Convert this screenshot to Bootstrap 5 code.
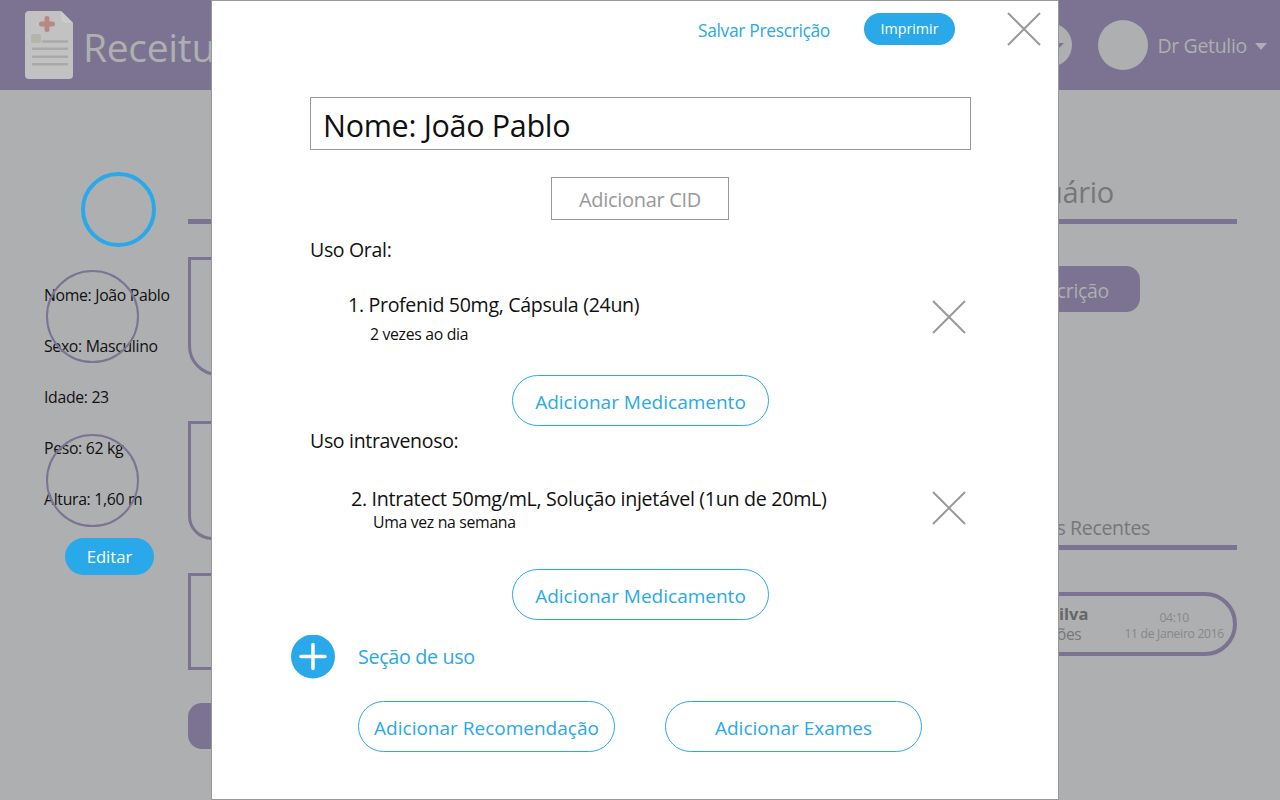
<!DOCTYPE html>
<html lang="pt-BR"><head><meta charset="utf-8"><title>Receituário</title>
<link href="https://cdn.jsdelivr.net/npm/bootstrap@5.3.0/dist/css/bootstrap.min.css" rel="stylesheet">
<style>
:root{--pur:#7b7391;--bg:#aeafb1;--blu:#29a8ea;--gry:#999}
html,body{height:100%;overflow:hidden}
body{background:var(--bg);font-family:"Open Sans","Noto Sans",sans-serif;color:#111;position:relative;letter-spacing:-.02em}
.topbar{height:90px;background:var(--pur);color:var(--bg);padding:11px 13px 11px 25px}
.brand-name{font-size:39px;margin-left:10px;line-height:1;margin-top:2px}
.bell{width:44px;height:44px;border-radius:50%;background:var(--bg);margin-right:26px;padding-right:8px}
.bell-caret{width:0;height:0;border:5px solid transparent;border-top:5px solid var(--pur);border-bottom:0}
.avatar{width:50px;height:50px;border-radius:50%;background:var(--bg);margin-right:9px}
.doc-name{font-size:19.5px;padding-top:2px}
.caret-down{width:0;height:0;border:6.5px solid transparent;border-top:7px solid var(--bg);border-bottom:0;margin-left:8px;margin-top:3px}
.body-area{height:710px}
.side{width:188px;padding:82px 0 0 44px;font-size:15.8px;position:relative}
.side-avatar{width:75px;height:75px;border-radius:50%;border:4px solid var(--blu);margin-left:37px;margin-bottom:38px}
.side p{margin:0;height:51px;line-height:20px}
.ring{position:absolute;left:46px;width:93px;height:93px;border:2px solid var(--pur);border-radius:50%}
.ring-a{top:180px}.ring-b{top:344px}
.edit-btn{width:89px;height:37px;background:var(--blu);color:#fff;border:0;border-radius:19px;font-size:16.7px;padding:0;margin-left:21px;margin-top:-2px}
.main-col{flex:0 0 460px;padding-top:129px}
.right-col{flex:1;padding:84px 43px 0 60px;color:#777}
.rule{height:5px;background:var(--pur)}
.box{border:3px solid var(--pur)}
.box-a{height:119px;margin-top:33px;border-radius:0 0 0 30px}
.box-b{height:119px;margin-top:45px;border-radius:0 0 0 24px}
.box-c{height:97px;margin-top:33px}
.purple-btn{height:46px;background:var(--pur);color:var(--bg);border-radius:14px;display:flex;align-items:center;font-size:19.5px}
.purple-a{margin-top:33px;width:260px;justify-content:center}
.purple-b{margin-top:42px;width:432px;justify-content:flex-end;padding:3px 31px 0 0}
.title-r{font-size:29px;line-height:36px;margin-bottom:9px;text-align:right;padding-right:123px}
.recent-t{font-size:19.5px;line-height:24px;margin-top:204px;margin-bottom:5px;text-align:right;padding-right:87px}
.recent-card{height:64px;border:4px solid var(--pur);border-radius:32px;margin-top:42px;padding:0 9px 0 20px}
.recent-who{margin-right:36px;text-align:right;padding-top:1px}
.recent-name{font-size:16.5px;font-weight:700;line-height:20px;color:#666;letter-spacing:0}
.recent-sub{font-size:15.5px;line-height:21px;margin-right:7px}
.recent-time{font-size:12.2px;line-height:16px;text-align:center;padding-top:3px;color:#888}
.sheet{position:fixed;left:211px;top:0;width:848px;height:800px;background:#fff;border:1px solid var(--gry);padding:0 87px 0 98px;z-index:5;color:#111}
.sheet-top{height:96px;margin-right:-70px;padding-top:11px}
.save-link{color:var(--blu);font-size:17.4px;text-decoration:none;margin-right:34px;margin-top:5px}
.print-btn{width:91px;height:32px;background:var(--blu);color:#fff;border:0;border-radius:16px;font-size:14.3px;padding:0;margin-top:1px;margin-right:52px}
.x-top{width:34px;height:34px;display:block}
.name-box{height:53px;border:1px solid var(--gry);font-size:30.5px;padding-left:12px;line-height:54px}
.cid-box{width:178px;height:43px;border:1px solid var(--gry);color:#999;font-size:20px;margin:27px 0 17px 241px;padding-top:2px;display:flex;align-items:center;justify-content:center}
.sec-label{font-size:19.5px;line-height:26px}
.sec-gap{margin-top:2px}
.med{position:relative;font-size:19.7px}
.med-a{height:112px;padding:29px 0 0 38px;font-size:19.6px}
.med-b{height:115px;padding:32px 0 0 41px}
.med .sub{display:block;font-size:15.8px;padding-left:22px;line-height:20px}
.med-a .sub{margin-top:6px}
.med-b .sub{margin-top:0}
.med-line{line-height:26px}
.x-med{position:absolute;right:5px;top:37px;width:34px;height:34px}
.pill{width:257px;height:51px;background:#fff;border:1px solid var(--blu);border-radius:26px;color:var(--blu);font-size:19px;padding:4px 0 0;display:block}
.add-sec{margin:15px 0 23px -19px;height:43px}
.plus{width:44px;height:44px;flex:none;margin-right:23px}
.add-sec span{color:var(--blu);font-size:19.7px}
.pill-row{margin-left:48px;gap:50px}
</style></head><body>
<header class="topbar d-flex align-items-center">
<svg width="48" height="68" viewBox="0 0 48 68"><path d="M4 0H36L48 12V64a4 4 0 0 1-4 4H4a4 4 0 0 1-4-4V4a4 4 0 0 1 4-4Z" fill="#c2c2c2"/><path d="M36 0L48 12H41a5 5 0 0 1-5-5Z" fill="#cbcbc9"/><path d="M22 7.500V18.500M16.500 13H27.500" stroke="#b88882" stroke-width="5" stroke-linecap="round"/><rect x="6" y="23" width="10" height="9" rx="2" fill="#b5b5a6"/><path d="M18 30.500H42M8 37.800H42M8 45.700H42M8 53.300H42" stroke="#a9a9a7" stroke-width="2.500" stroke-linecap="round"/></svg>
<div class="brand-name">Receituário</div>
<div class="ms-auto d-flex align-items-center">
<div class="bell d-flex align-items-center justify-content-end"><span class="bell-caret"></span></div><div class="avatar"></div><div class="doc-name">Dr Getulio</div><div class="caret-down"></div>
</div></header>
<div class="body-area d-flex">
<aside class="side">
<div class="side-avatar"></div>
<p>Nome: João Pablo</p><p>Sexo: Masculino</p><p>Idade: 23</p><p>Peso: 62 kg</p><p>Altura: 1,60 m</p>
<button class="edit-btn">Editar</button>
<span class="ring ring-a"></span><span class="ring ring-b"></span>
</aside>
<section class="main-col">
<div class="rule"></div>
<div class="box box-a"></div><div class="box box-b"></div><div class="box box-c"></div>
<div class="purple-btn purple-a">Adicionar</div>
</section>
<section class="right-col">
<div class="title-r">Dados do Usuário</div><div class="rule"></div>
<div class="purple-btn purple-b">Nova Prescrição</div>
<div class="recent-t">Prescrições Recentes</div><div class="rule"></div>
<div class="recent-card d-flex align-items-center justify-content-end">
<div class="recent-who"><div class="recent-name">João da Silva</div><div class="recent-sub">Prescrições</div></div>
<div class="recent-time">04:10<br>11 de Janeiro 2016</div>
</div>
</section>
</div>
<div class="sheet">
<div class="sheet-top d-flex justify-content-end align-items-start">
<a class="save-link" href="#">Salvar Prescrição</a>
<button class="print-btn">Imprimir</button>
<svg class="x-top" viewBox="0 0 34 34"><path d="M1 1L33 33M33 1L1 33" stroke="#999" stroke-width="2"/></svg>
</div>
<div class="name-box">Nome: João Pablo</div>
<div class="cid-box">Adicionar CID</div>
<div class="sec-label">Uso Oral:</div>
<div class="med med-a"><div class="med-line">1. Profenid 50mg, Cápsula (24un)</div><div class="sub">2 vezes ao dia</div>
<svg class="x-med" viewBox="0 0 34 34"><path d="M1 1L33 33M33 1L1 33" stroke="#999" stroke-width="2"/></svg></div>
<button class="pill mx-auto">Adicionar Medicamento</button>
<div class="sec-label sec-gap">Uso intravenoso:</div>
<div class="med med-b"><div class="med-line">2. Intratect 50mg/mL, Solução injetável (1un de 20mL)</div><div class="sub">Uma vez na semana</div>
<svg class="x-med" viewBox="0 0 34 34"><path d="M1 1L33 33M33 1L1 33" stroke="#999" stroke-width="2"/></svg></div>
<button class="pill mx-auto">Adicionar Medicamento</button>
<div class="add-sec d-flex align-items-center">
<svg class="plus" viewBox="0 0 44 44"><circle cx="22" cy="21.500" r="22" fill="#29a8ea"/><path d="M10 21.500H34M22 9.500V33.500" stroke="#fff" stroke-width="3.500" stroke-linecap="round"/></svg>
<span>Seção de uso</span></div>
<div class="d-flex pill-row">
<button class="pill">Adicionar Recomendação</button><button class="pill">Adicionar Exames</button>
</div>
</div>
</body></html>
